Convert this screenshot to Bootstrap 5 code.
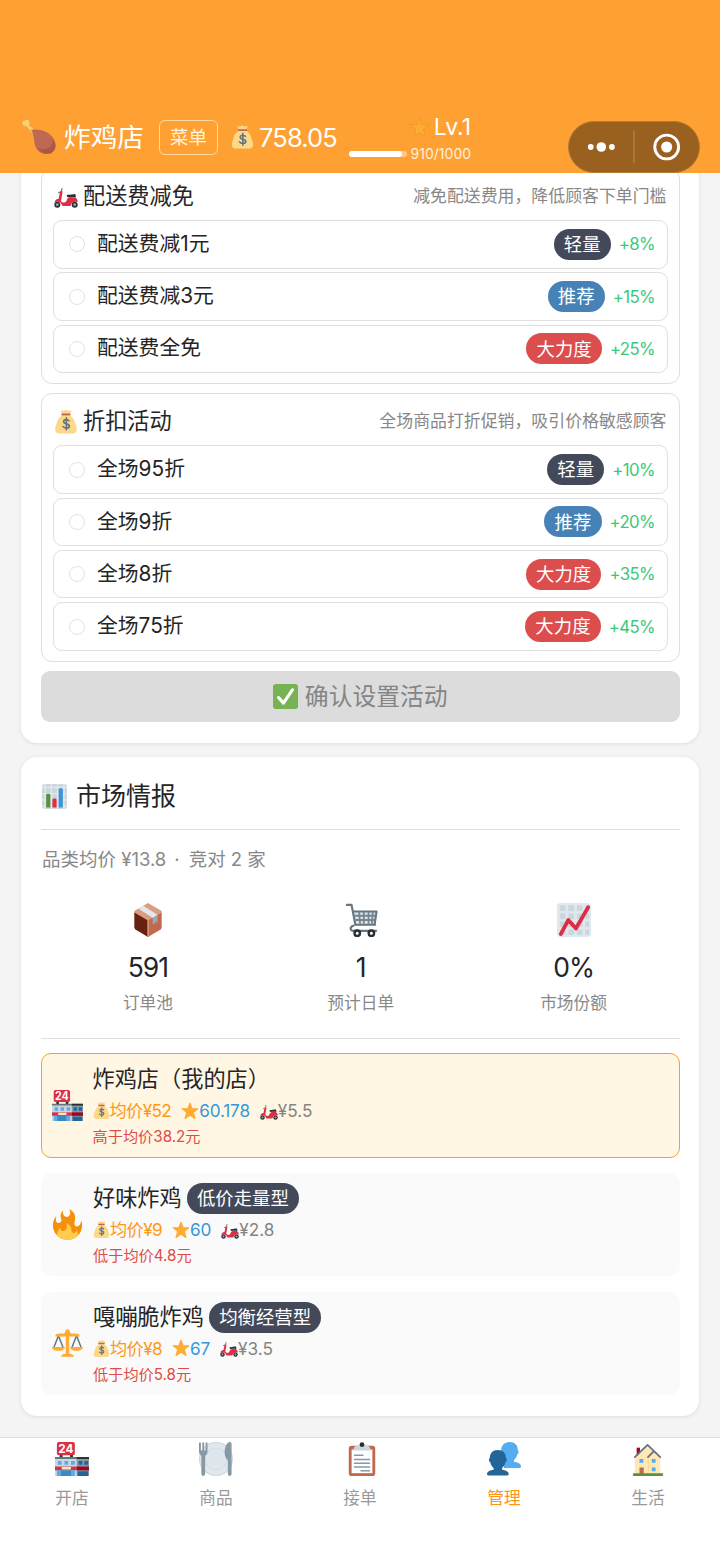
<!DOCTYPE html>
<html lang="zh-CN">
<head>
<meta charset="utf-8">
<meta name="viewport" content="width=device-width, initial-scale=1">
<title>炸鸡店</title>
<link href="https://cdn.jsdelivr.net/npm/bootstrap@5.3.0/dist/css/bootstrap.min.css" rel="stylesheet">
<style>
body{font-family:Inter,"Noto Sans CJK SC",sans-serif;background:#f4f4f4;color:#252525;width:720px;height:1564px;overflow:hidden;line-height:1}
svg{flex:none;display:block}
.num{letter-spacing:-.035em}
.top-bar{height:173px;background:#ffa033;color:#fff;padding:101px 20px 0 22px;position:relative;z-index:2}
.top-row{height:72px}
.shop-title{font-size:26.7px;margin-left:8px}
.menu-btn{width:59px;height:35px;border:1.5px solid #ffd9a0;border-radius:6px;font-size:18.5px;margin-left:15px;color:#fff3df}
.money-bag{margin-left:14px}
.money{font-size:25.5px;margin-left:6px;width:78px;padding-top:1px}
.level{width:122px;margin-left:12px}
.level-name{font-size:23px;height:30px;padding-top:2px}
.level-xp{height:22px;font-size:14px;color:#fff0da;padding-top:3px}
.xp-track{width:58px;height:6px;border-radius:3px;background:#ffc88a}
.xp-fill{height:6px;border-radius:3px;background:#fff}
.capsule{width:132px;height:52px;border-radius:26px;background:#9a601f;border:1px solid #b07a35;margin:20px 0 0 auto}
.panel{background:#fff;width:678px;margin-left:21px;border-radius:16px;box-shadow:0 1px 4px rgba(0,0,0,.09);padding:0 19.5px 0 20px}
.panel-activity{height:583px;margin-top:-13px;padding-top:8px}
.panel-market{height:659px;margin-top:14px}
.option-group{border:1.5px solid #dfdfdf;border-radius:11px;padding:0 11px;margin-bottom:9.5px}
.group-head{height:51px;padding-top:3px;padding-right:1px;padding-left:1px}
.group-title{font-size:22.2px;margin-left:5px}
.group-desc{font-size:16.9px;color:#888}
.option-row{height:48.5px;margin-bottom:3.8px;border:1.5px solid #e0e0e0;border-radius:9px;padding:0 11.5px 0 15px;font-size:20.8px}
.option-row:last-child{margin-bottom:9.8px}
.dot{width:16px;height:16px;border:1.3px solid #e2e2e2;border-radius:50%;margin-right:12px}
.tag{height:31px;border-radius:16px;padding:0 10.2px;color:#fff;font-size:18.4px;display:inline-flex;align-items:center}
.tag-dark{background:#444959}.tag-blue{background:#4682b5}.tag-red{background:#dc4e4e}
.gain{font-size:16.8px;color:#3bc979;margin-left:8px;padding-top:1px}
.confirm-btn{height:51px;border-radius:9px;background:#dcdcdc;color:#858585;font-size:23.8px}
.confirm-btn svg{margin-right:7px}
.market-head{height:72.5px;padding-top:8px;padding-left:1px;border-bottom:1.5px solid #dcdcdc;font-size:25px}
.market-head svg{margin-right:9px}
.market-sub{height:60px;font-size:18.5px;color:#888;padding-left:1px}
.market-dot{margin:0 9px 0 8px}
.stats{height:149px;border-bottom:1.5px solid #dfdfdf}
.stats .col{padding:13px 0 0 1px}
.stat-num{font-size:26.5px;height:28px;margin-top:17px}
.stat-label{font-size:16.7px;color:#888;margin-top:13px}
.shop-card{height:103px;border-radius:10px;background:#fafafa;margin-bottom:15.7px;padding:0 11px}
.shop-mine{height:105px;background:#fff6e3;border:1.5px solid #eda42f;margin-top:14.5px;margin-bottom:15px;padding:0 9.5px}
.shop-info{margin-left:10px}
.shop-name{font-size:22.2px;height:31px}
.shop-name .tag{margin-left:5px}
.shop-line{font-size:17.2px;height:31px}
.shop-line svg+span{margin-right:10px}
.shop-diff{font-size:15.2px;height:21px;color:#df4c45}
.c-orange{color:#ff9818;letter-spacing:-.035em}.c-blue{color:#3498db;letter-spacing:-.01em}.c-gray{color:#858585}
.tab-bar{height:127px;margin-top:21px;background:#fff;border-top:1.5px solid #dedede}
.tab-item{font-size:16.7px;color:#999;padding-top:4px;gap:14px}
.tab-item.on{color:#ff9413}
</style>
</head>
<body>
<svg width="0" height="0" class="position-absolute" aria-hidden="true">
<symbol id="leg" viewBox="0 0 36 36"><path fill="#f4cf73" d="M1 5C-1 3 1 0 3 1c0-3 5-2 5 2 0 1-1 2 0 3l8 7-3 3-8-9C4 6 2 6 1 5z"/><path fill="#bf6952" d="M9 9c1 2 3 1 5 1 8 0 15 3 19 9 4 7 3 13-2 16-6 3-13 0-16-5-3-6-1-13-6-21z"/><path fill="#aa5947" d="M33 20c0 10-10 13-17 9 4 6 10 8 15 6 5-3 6-9 2-15z"/></symbol>
<symbol id="bag" viewBox="0 0 36 36"><path fill="#fdd888" d="M31.9 21c-1-6-5-11-8.500-12H12.500C9 10 5 15 4 21c-3 6-4 15 4 15h20c8 0 7-9 3.900-15z"/><path fill="#fdd888" d="M10 1l4 1 4-1.500 4 1.500 4-1-2 6H12z"/><rect x="11" y="6" width="14" height="3" rx="1.500" fill="#bf6952"/><path fill="none" stroke="#67757f" stroke-width="2.500" stroke-linecap="round" d="M22.500 17c-1-2-8-3-8 1 0 5 8.500 2 8.500 7 0 4-8 3.500-9.500.5M18.500 12.500v18"/></symbol>
<symbol id="star" viewBox="0 0 36 36"><path stroke="#ffac33" stroke-width="2.500" stroke-linejoin="round" fill="#ffac33" d="M18 2.500l4.200 11h11.300l-9 7.200 3.300 12.300L18 26l-9.800 7 3.300-12.300-9-7.200h11.300z"/></symbol>
<symbol id="scooter" viewBox="0 0 36 36"><path fill="none" stroke="#66757f" stroke-width="1.800" stroke-linecap="round" d="M7 13l4-2 1-4"/><circle cx="5" cy="31" r="4.500" fill="#292f33"/><circle cx="5" cy="31" r="2" fill="#99aab5"/><circle cx="31" cy="31" r="4.500" fill="#292f33"/><circle cx="31" cy="31" r="2" fill="#99aab5"/><path fill="#dd2e44" d="M9 12l4-1-1 6-1.500 8.500c2 3 6 3 8 .5 1-4 3-6 6-6h7c3 2 4 4 4 7-5-1-9 0-10 4l-1 2H13l-3-5c-3-2-6-2-9 0 0-4 3-6 6-6z"/><path fill="#292f33" d="M19 16c4 1 8-1 13-1l1 5c-4-1-8 0-13 0z"/></symbol>
<symbol id="check" viewBox="0 0 36 36"><rect width="36" height="36" rx="4" fill="#77b255"/><path fill="none" stroke="#fff" stroke-width="4.500" stroke-linecap="round" stroke-linejoin="round" d="M8 19.500l7 8 13-19"/></symbol>
<symbol id="bars" viewBox="0 0 36 36"><rect width="36" height="36" rx="4" fill="#ccd6dd"/><path stroke="#e1e8ed" stroke-width="2" d="M4.500 0v36M13.500 0v36M22.500 0v36M31.500 0v36M0 5h36M0 14h36M0 23h36M0 32h36"/><path fill="#5c913b" d="M6 16a2 2 0 012-2h2a2 2 0 012 2v18H6z"/><path fill="#dd2e44" d="M15 23a2 2 0 012-2h2a2 2 0 012 2v11h-6z"/><path fill="#3b94d9" d="M24 8a2 2 0 012-2h2a2 2 0 012 2v26h-6z"/></symbol>
<symbol id="trend" viewBox="0 0 36 36"><rect width="36" height="36" rx="4" fill="#e1e8ed"/><path stroke="#ccd6dd" stroke-width="6" stroke-dasharray="6 3" d="M3 5.500h31M3 14h31M3 22.500h31M3 31h31"/><path fill="none" stroke="#dd2e44" stroke-width="4" stroke-linecap="round" stroke-linejoin="round" d="M4 33l8-15 8 9L33 4.500"/></symbol>
<symbol id="box" viewBox="0 0 36 36"><path fill="#d99e82" d="M18 0l14.500 8.500v2L18 20 3.500 10.500v-2z"/><path fill="#662113" d="M3.500 10L18 18.500V36L4.700 28a3 3 0 01-1.200-2z"/><path fill="#c1694f" d="M32.500 10L18 18.500V36l13.300-8a3 3 0 001.200-2z"/><path fill="#d99e82" d="M17.300 18h1.500v17.500h-1.500z"/><path fill="#99aab5" d="M23 15.500l5-3v8l-2-.5-1 2-2 .5z"/><path fill="#e1e8ed" d="M8 6l5-3 15 9.500-5 3z"/></symbol>
<symbol id="cart" viewBox="0 0 36 36"><path fill="#dfe5e9" d="M9 9h26l-2 14H12z"/><path fill="none" stroke="#66757f" stroke-width="2.200" stroke-linecap="round" stroke-linejoin="round" d="M3 2h5l4 21h21M10 9h24.500l-2 13M10 24c-4 1-4 5.500 0 5.500h24"/><path fill="none" stroke="#748490" stroke-width="1.900" d="M10 13.500h23M11 18h22M16 9l1 13M21 9v13M26 9v13M30.500 9l-1 13"/><g fill="#fff" stroke="#292f33" stroke-width="2.600"><circle cx="14" cy="32" r="2.900"/><circle cx="29" cy="32" r="2.900"/></g></symbol>
<symbol id="store" viewBox="0 0 36 36"><path fill="#292f33" d="M5 12h3v5H5zM16 12h3v5h-3z"/><rect x="2" y="0" width="19" height="14" rx="2" fill="#dd2e44"/><path fill="#ccd6dd" d="M0 17h36v19H0z"/><path fill="#8899a6" d="M23 17h13v19H23z"/><path fill="#66757f" d="M0 16h36v2H0z"/><path fill="#292f33" d="M23 16h13v2H23z"/><path fill="#55acee" d="M3 20h4v4H3zM10 20h4v4h-4zM17 20h4v4h-4z"/><path fill="#226699" d="M25 20h4v4h-4zM31 20h4v4h-4z"/><path fill="#dd2e44" d="M0 26h23v4H0z"/><path fill="#a0041e" d="M23 26h13v4H23z"/><rect x="7" y="26.500" width="10" height="2.500" rx="1" fill="#ffe8b6"/><path fill="#55acee" d="M2 30h4v6H2zM17 30h4v6h-4z"/><path fill="#3b88c3" d="M6 30h11v6H6z"/><path fill="#226699" d="M24 31h11v5H24z"/></symbol>
<symbol id="fire" viewBox="0 0 36 36"><path fill="#f4900c" d="M35 19c0-2.062-.367-4.039-1.040-5.868-.46 5.389-3.333 8.157-6.335 6.868-2.812-1.208-.917-5.917-.777-8.164.236-3.809-.012-8.169-6.931-11.794 2.875 5.500.333 8.917-2.333 9.125-2.958.231-5.667-2.542-4.667-7.042-3.238 2.386-3.332 6.402-2.333 9 1.042 2.708-.042 4.958-2.583 5.208-2.840.28-4.418-3.041-2.963-8.333C2.520 10.965 1 14.805 1 19c0 9.389 7.611 17 17 17s17-7.611 17-17z"/><path fill="#ffcc4d" d="M28.394 23.999c.148 3.084-2.561 4.293-4.019 3.709-2.106-.843-1.541-2.291-2.083-5.291s-2.625-5.083-5.708-6c2.250 6.333-1.247 8.667-3.080 9.084-1.872.426-3.753-.001-3.968-4.007C7.352 23.668 6 26.676 6 30c0 .368.023.73.055 1.090C9.125 34.124 13.342 36 18 36s8.875-1.876 11.945-4.910c.032-.36.055-.722.055-1.090 0-2.187-.584-4.236-1.606-6.001z"/></symbol>
<symbol id="scale" viewBox="0 0 36 36"><path fill="none" stroke="#66757f" stroke-width="1.700" d="M7.500 9L2 23M7.500 9L13 23M28.500 9L23 23M28.500 9L34 23"/><path fill="#ffac33" d="M0 22h15c0 6-15 6-15 0zM21 22h15c0 6-15 6-15 0zM16 8h4v22h-4zM10.500 33.500c0-5 15-5 15 0zM4 8c4-3 10 0 11-3 1-2 5-2 6 0 1 3 7 0 11 3v2H4z"/><circle cx="18" cy="4" r="2.500" fill="#ffac33"/></symbol>
<symbol id="plate" viewBox="0 0 36 36"><circle cx="18" cy="18" r="18" fill="#ccd6dd"/><circle cx="18" cy="18" r="17" fill="#e1e8ed"/><circle cx="18" cy="18" r="12" fill="#d3dce3"/><circle cx="18" cy="18" r="11" fill="#dfe7ed"/><path fill="#8899a6" d="M0 1c0-1 2-1 2 0v8h1.500V1c0-1 2-1 2 0v8H7V1c0-1 2-1 2 0v9c0 3-1.500 4-2.500 4.500V34c0 2.500-4 2.500-4 0V14.500C1.500 14 0 13 0 10zM34.500 2v32c0 2.500-4 2.500-4 0V19c-6-4-3-19 2-19 1 0 2 1 2 2z"/></symbol>
<symbol id="clip" viewBox="0 0 36 36"><rect x="4" y="4" width="28" height="32" rx="3" fill="#c1694f"/><path fill="#fff" d="M7 8h22v25H7z"/><path fill="#ccd6dd" d="M9 9c0-3 1-5 5-5 1-3 7-3 8 0 4 0 5 2 5 5z"/><circle cx="18" cy="2.800" r="2.500" fill="#292f33"/><path stroke="#8899a6" stroke-width="1.500" stroke-linecap="round" d="M10 14h9M10 18.500h16M10 22.500h16M10 26.500h16M17 30.500h9"/></symbol>
<symbol id="people" viewBox="0 0 36 36"><path fill="#55acee" d="M15 9c0-5 3-9 9-9s9 4 8.500 9c1.500 0 1 4-.5 4-.5 3-2 5-3.500 6v2c4 .5 7.500 2 7.500 5 0 1-.5 1.500-1.500 1.500H18z"/><path fill="#269" d="M3 17c0-5 3-8.500 8.500-8.500S20 12 20 17c1.500 0 1 4.500-.5 4.500-.5 3-2 4.500-3.500 6v2c4 .5 7 2 7 4.500 0 1-.5 1.500-1.500 1.500h-20C.5 35.500 0 35 0 34c0-2.500 3-4 7-4.500v-2c-1.500-1-3-3-3.500-6C2 21.500 1.500 17 3 17z"/></symbol>
<symbol id="house" viewBox="0 0 36 36"><path fill="#a0041e" d="M6 6h3.500v9H6z"/><path fill="#ffe8b6" d="M4 17L17.500 4 31 16v18H4z"/><path fill="none" stroke="#ffd983" stroke-width="1" d="M18.500 16v18"/><path fill="none" stroke="#66757f" stroke-width="1.900" stroke-linecap="round" stroke-linejoin="round" d="M4 16L17.500 3 31 16M18 16l6-6"/><path fill="#55acee" d="M9 18h4v4H9zM22 18h4v4h-4zM22 27h4v4h-4z"/><path fill="#c1694f" d="M9 27h4.500v7H9z"/><rect x="2" y="33" width="32" height="3" rx="1" fill="#5c913b"/></symbol>
</svg>

<header class="top-bar">
  <div class="top-row d-flex align-items-center">
    <svg width="34" height="34"><use href="#leg"/></svg>
    <span class="shop-title text-nowrap">炸鸡店</span>
    <span class="menu-btn d-flex align-items-center justify-content-center">菜单</span>
    <svg width="21" height="24" class="money-bag" viewBox="2 0 32 36"><use href="#bag" width="36" height="36"/></svg>
    <span class="money num">758.05</span>
    <div class="level d-flex flex-column">
      <div class="level-name d-flex align-items-center justify-content-end"><svg width="21" height="21" class="me-1" viewBox="-1 -1 38 38"><path fill="#ffac33" stroke="#e99a22" stroke-width="1.500" stroke-linejoin="round" d="M18 1l4.500 12h12.500l-10 8 3.500 13.500L18 27 7.500 34.500 11 21 1 13h12.500z"/></svg><span>Lv.1</span></div>
      <div class="level-xp d-flex align-items-center justify-content-between"><div class="xp-track"><div class="xp-fill" style="width:91%"></div></div><span>910/1000</span></div>
    </div>
    <svg class="capsule" viewBox="0 0 132 52"><g fill="#fff"><circle cx="21" cy="26" r="3"/><circle cx="32" cy="26" r="5"/><circle cx="43" cy="26" r="3"/></g><path stroke="#b98a50" stroke-width="1.200" d="M66 9v34"/><circle cx="100" cy="26" r="12.400" fill="none" stroke="#fff" stroke-width="3"/><circle cx="100" cy="26" r="5.800" fill="#fff"/></svg>
  </div>
</header>

<main>
  <section class="panel panel-activity">
    <div class="option-group">
      <div class="group-head d-flex align-items-center"><svg width="24" height="24"><use href="#scooter"/></svg><span class="group-title">配送费减免</span><span class="group-desc ms-auto">减免配送费用，降低顾客下单门槛</span></div>
      <div class="option-row d-flex align-items-center"><i class="dot"></i><span>配送费减1元</span><span class="tag tag-dark ms-auto">轻量</span><span class="gain num">+8%</span></div>
      <div class="option-row d-flex align-items-center"><i class="dot"></i><span>配送费减3元</span><span class="tag tag-blue ms-auto">推荐</span><span class="gain num">+15%</span></div>
      <div class="option-row d-flex align-items-center"><i class="dot"></i><span>配送费全免</span><span class="tag tag-red ms-auto">大力度</span><span class="gain num">+25%</span></div>
    </div>
    <div class="option-group">
      <div class="group-head d-flex align-items-center"><svg width="24" height="25"><use href="#bag"/></svg><span class="group-title">折扣活动</span><span class="group-desc ms-auto">全场商品打折促销，吸引价格敏感顾客</span></div>
      <div class="option-row d-flex align-items-center"><i class="dot"></i><span>全场95折</span><span class="tag tag-dark ms-auto">轻量</span><span class="gain num">+10%</span></div>
      <div class="option-row d-flex align-items-center"><i class="dot"></i><span>全场9折</span><span class="tag tag-blue ms-auto">推荐</span><span class="gain num">+20%</span></div>
      <div class="option-row d-flex align-items-center"><i class="dot"></i><span>全场8折</span><span class="tag tag-red ms-auto">大力度</span><span class="gain num">+35%</span></div>
      <div class="option-row d-flex align-items-center"><i class="dot"></i><span>全场75折</span><span class="tag tag-red ms-auto">大力度</span><span class="gain num">+45%</span></div>
    </div>
    <div class="confirm-btn d-flex align-items-center justify-content-center"><svg width="25" height="25"><use href="#check"/></svg>确认设置活动</div>
  </section>

  <section class="panel panel-market">
    <div class="market-head d-flex align-items-center"><svg width="25" height="25"><use href="#bars"/></svg>市场情报</div>
    <div class="market-sub d-flex align-items-center">品类均价&nbsp;<span>¥13.8</span><span class="market-dot">·</span>竞对 2 家</div>
    <div class="stats row g-0 text-center">
      <div class="col d-flex flex-column align-items-center"><svg width="34" height="34"><use href="#box"/></svg><div class="stat-num num">591</div><div class="stat-label">订单池</div></div>
      <div class="col d-flex flex-column align-items-center"><svg width="34" height="34"><use href="#cart"/></svg><div class="stat-num num">1</div><div class="stat-label">预计日单</div></div>
      <div class="col d-flex flex-column align-items-center"><svg width="34" height="34"><use href="#trend"/></svg><div class="stat-num num">0%</div><div class="stat-label">市场份额</div></div>
    </div>
    <div class="shop-card shop-mine d-flex align-items-center">
      <svg width="31" height="31" viewBox="0 0 36 36"><use href="#store"/><text x="11.500" y="11.600" font-size="13" font-weight="700" fill="#fff" text-anchor="middle" textLength="16" lengthAdjust="spacingAndGlyphs">24</text></svg>
      <div class="shop-info"><div class="shop-name d-flex align-items-center">炸鸡店（我的店）</div>
      <div class="shop-line d-flex align-items-center"><svg width="17" height="17"><use href="#bag"/></svg><span class="c-orange">均价¥52</span><svg width="18" height="18"><use href="#star"/></svg><span class="c-blue">60.178</span><svg width="18" height="18"><use href="#scooter"/></svg><span class="c-gray">¥5.5</span></div>
      <div class="shop-diff d-flex align-items-center">高于均价38.2元</div></div>
    </div>
    <div class="shop-card d-flex align-items-center">
      <svg width="31" height="31"><use href="#fire"/></svg>
      <div class="shop-info"><div class="shop-name d-flex align-items-center">好味炸鸡<span class="tag tag-dark">低价走量型</span></div>
      <div class="shop-line d-flex align-items-center"><svg width="17" height="17"><use href="#bag"/></svg><span class="c-orange">均价¥9</span><svg width="18" height="18"><use href="#star"/></svg><span class="c-blue">60</span><svg width="18" height="18"><use href="#scooter"/></svg><span class="c-gray">¥2.8</span></div>
      <div class="shop-diff d-flex align-items-center">低于均价4.8元</div></div>
    </div>
    <div class="shop-card d-flex align-items-center">
      <svg width="31" height="31"><use href="#scale"/></svg>
      <div class="shop-info"><div class="shop-name d-flex align-items-center">嘎嘣脆炸鸡<span class="tag tag-dark">均衡经营型</span></div>
      <div class="shop-line d-flex align-items-center"><svg width="17" height="17"><use href="#bag"/></svg><span class="c-orange">均价¥8</span><svg width="18" height="18"><use href="#star"/></svg><span class="c-blue">67</span><svg width="18" height="18"><use href="#scooter"/></svg><span class="c-gray">¥3.5</span></div>
      <div class="shop-diff d-flex align-items-center">低于均价5.8元</div></div>
    </div>
  </section>
</main>

<nav class="tab-bar row g-0">
  <div class="tab-item col d-flex flex-column align-items-center"><svg width="34" height="34" viewBox="0 0 36 36"><use href="#store"/><text x="11.500" y="11.600" font-size="13" font-weight="700" fill="#fff" text-anchor="middle" textLength="16" lengthAdjust="spacingAndGlyphs">24</text></svg>开店</div>
  <div class="tab-item col d-flex flex-column align-items-center"><svg width="34" height="34"><use href="#plate"/></svg>商品</div>
  <div class="tab-item col d-flex flex-column align-items-center"><svg width="34" height="34" class="ms-1"><use href="#clip"/></svg>接单</div>
  <div class="tab-item on col d-flex flex-column align-items-center"><svg width="34" height="34"><use href="#people"/></svg>管理</div>
  <div class="tab-item col d-flex flex-column align-items-center"><svg width="34" height="34"><use href="#house"/></svg>生活</div>
</nav>
<script src="https://cdn.jsdelivr.net/npm/bootstrap@5.3.0/dist/js/bootstrap.bundle.min.js"></script>
</body>
</html>
